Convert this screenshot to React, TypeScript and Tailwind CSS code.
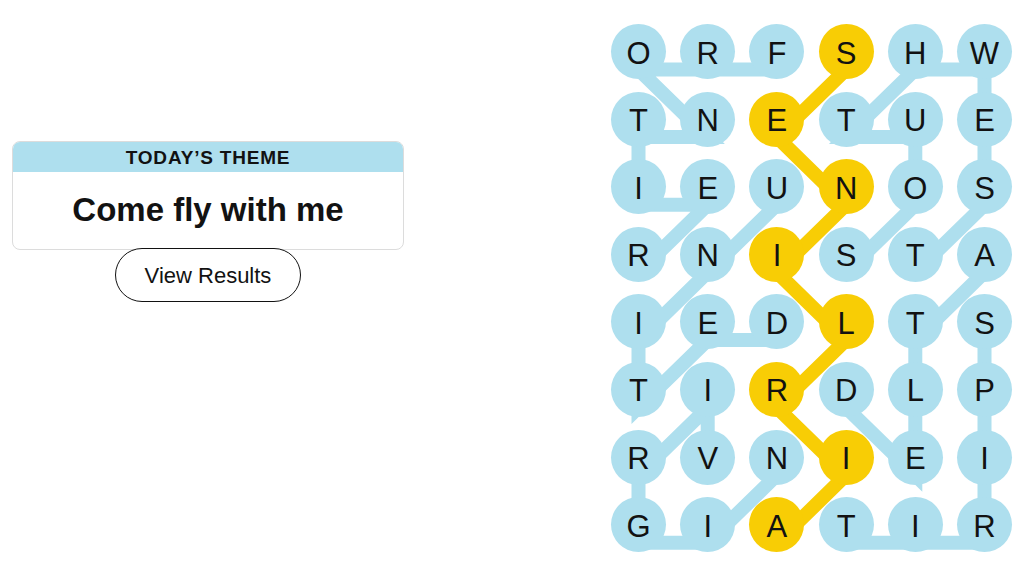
import React from "react";

const letters = ["ORFSHW", "TNETUE", "IEUNOS", "RNISTA", "IEDLTS", "TIRDLP", "RVNIEI", "GIATIR"];

const words: number[][][] = [
  [[0, 2], [0, 1], [0, 0], [1, 1], [1, 0], [2, 0], [2, 1], [3, 0]],
  [[3, 3], [2, 4], [1, 4], [1, 3], [0, 4], [0, 5], [1, 5], [2, 5], [3, 4]],
  [[2, 2], [3, 1], [4, 0], [5, 0], [4, 1], [4, 2]],
  [[6, 1], [5, 1], [6, 0], [7, 0], [7, 1], [6, 2]],
  [[4, 5], [5, 5], [6, 5], [7, 5], [7, 4], [7, 3]],
  [[5, 3], [6, 4], [5, 4], [4, 4], [3, 5]],
];

const spangram: number[][] = [[7, 2], [6, 3], [5, 2], [4, 3], [3, 2], [2, 3], [1, 2], [0, 3]];

const SIZE = 55;
const COL_STEP = 69.2;
const ROW_STEP = 67.6;
const LINE_DROP = 18;

function toPoints(path: number[][]) {
  return path
    .map(([r, c]) => `${SIZE / 2 + c * COL_STEP},${SIZE / 2 + r * ROW_STEP + LINE_DROP}`)
    .join(" ");
}

function isSpangram(r: number, c: number) {
  return spangram.some(([sr, sc]) => sr === r && sc === c);
}

function Board() {
  return (
    <div className="relative">
      <svg
        className="absolute left-0 top-0 overflow-visible"
        width={401}
        height={528}
        viewBox="0 0 401 528"
      >
        {words.map((w, i) => (
          <polyline
            key={i}
            points={toPoints(w)}
            fill="none"
            stroke="#aedfee"
            strokeWidth={14}
            strokeLinejoin="miter"
          />
        ))}
        <polyline
          points={toPoints(spangram)}
          fill="none"
          stroke="#f8cd05"
          strokeWidth={14}
          strokeLinejoin="miter"
        />
      </svg>
      <div className="relative grid grid-cols-[repeat(6,55px)] gap-x-[14.2px] gap-y-[12.6px]">
        {letters.map((row, r) =>
          row.split("").map((ch, c) => (
            <div
              key={`${r}-${c}`}
              className={`w-[55px] h-[55px] rounded-full flex items-center justify-center text-[31px] leading-none text-[#121212] ${
                isSpangram(r, c) ? "bg-[#f8cd05]" : "bg-[#aedfee]"
              }`}
            >
              <span className="pt-[3px]">{ch}</span>
            </div>
          ))
        )}
      </div>
    </div>
  );
}

export default function App() {
  return (
    <div
      className="w-[1024px] h-[576px] bg-white flex justify-between px-3"
      style={{ fontFamily: '"Liberation Sans", Arial, sans-serif' }}
    >
      <div className="w-[392px] pt-[141px] flex flex-col items-center">
        <div className="w-full rounded-lg border border-[#dcdcdc] overflow-hidden">
          <div className="h-[30px] bg-[#aedfee] flex items-center justify-center pt-[3px]">
            <p className="text-[19px] font-bold tracking-[0.8px] text-[#121212] uppercase">Today’s Theme</p>
          </div>
          <div className="h-[77px] flex items-center justify-center pb-[2px]">
            <p className="text-[33px] font-bold text-[#121212]">Come fly with me</p>
          </div>
        </div>
        <button className="-mt-[2px] w-[186px] h-[54px] rounded-full border border-[#121212] text-[22px] text-[#121212] bg-white">
          View Results
        </button>
      </div>
      <div className="pt-[24px]">
        <Board />
      </div>
    </div>
  );
}
